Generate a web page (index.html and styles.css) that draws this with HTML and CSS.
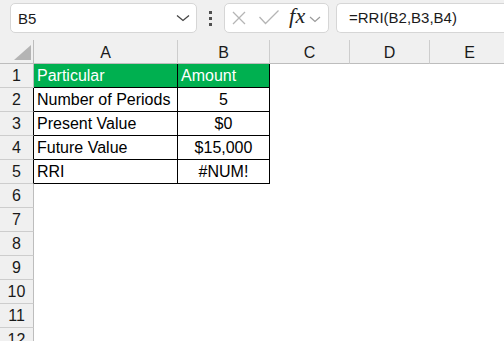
FILE: index.html
```html
<!DOCTYPE html>
<html>
<head>
<meta charset="utf-8">
<link rel="stylesheet" href="styles.css">
</head>
<body>
<div class="toolbar">
  <div class="namebox">
    <span class="nb-text">B5</span>
    <svg class="nb-chev" width="14" height="8" viewBox="0 0 14 8"><path d="M1 1.5 L7 6.5 L13 1.5" fill="none" stroke="#444" stroke-width="1.3"/></svg>
  </div>
  <div class="dots"><i></i><i></i><i></i></div>
  <div class="fbtns">
    <svg class="ic-x" width="16" height="16" viewBox="0 0 16 16"><path d="M2 2 L14 14 M14 2 L2 14" stroke="#b5b5b5" stroke-width="1.3" fill="none"/></svg>
    <svg class="ic-ok" width="22" height="16" viewBox="0 0 22 16"><path d="M1.5 8 L7.5 14.5 L20.5 1.5" stroke="#b5b5b5" stroke-width="1.3" fill="none"/></svg>
    <span class="fx">fx</span>
    <svg class="ic-chev" width="12" height="8" viewBox="0 0 12 8"><path d="M1 2 L6 6.5 L11 2" fill="none" stroke="#9a9a9a" stroke-width="1.2"/></svg>
  </div>
  <div class="finput">=RRI(B2,B3,B4)</div>
</div>
<div class="sheet">
  <div class="corner"><span class="tri"></span></div>
  <div class="ch">A</div><div class="ch">B</div><div class="ch">C</div><div class="ch">D</div><div class="ch">E</div>

  <div class="rh">1</div><div class="c hd">Particular</div><div class="c hd">Amount</div><div class="c"></div><div class="c"></div><div class="c"></div>
  <div class="rh tb">2</div><div class="c t">Number of Periods</div><div class="c t ctr">5</div><div class="c"></div><div class="c"></div><div class="c"></div>
  <div class="rh tb">3</div><div class="c t">Present Value</div><div class="c t ctr">$0</div><div class="c"></div><div class="c"></div><div class="c"></div>
  <div class="rh tb">4</div><div class="c t">Future Value</div><div class="c t ctr">$15,000</div><div class="c"></div><div class="c"></div><div class="c"></div>
  <div class="rh tb">5</div><div class="c t">RRI</div><div class="c t ctr">#NUM!</div><div class="c"></div><div class="c"></div><div class="c"></div>
  <div class="rh">6</div><div class="c"></div><div class="c"></div><div class="c"></div><div class="c"></div><div class="c"></div>
  <div class="rh">7</div><div class="c"></div><div class="c"></div><div class="c"></div><div class="c"></div><div class="c"></div>
  <div class="rh">8</div><div class="c"></div><div class="c"></div><div class="c"></div><div class="c"></div><div class="c"></div>
  <div class="rh">9</div><div class="c"></div><div class="c"></div><div class="c"></div><div class="c"></div><div class="c"></div>
  <div class="rh">10</div><div class="c"></div><div class="c"></div><div class="c"></div><div class="c"></div><div class="c"></div>
  <div class="rh">11</div><div class="c"></div><div class="c"></div><div class="c"></div><div class="c"></div><div class="c"></div>
  <div class="rh">12</div><div class="c"></div><div class="c"></div><div class="c"></div><div class="c"></div><div class="c"></div>
</div>
</body>
</html>
```
FILE: styles.css
```css
* { box-sizing: border-box; }
html, body { margin: 0; padding: 0; }
body {
  width: 504px;
  height: 341px;
  overflow: hidden;
  background: #ffffff;
  font-family: "Liberation Sans", Arial, sans-serif;
  color: #000;
}
.toolbar {
  height: 40px;
  background: #f0f0f0;
  display: flex;
  align-items: flex-start;
  padding-top: 3px;
  padding-left: 10px;
}
.namebox {
  width: 187px;
  height: 30px;
  background: #fff;
  border: 1px solid #d6d6d6;
  border-radius: 5px;
  display: flex;
  align-items: center;
  justify-content: space-between;
  padding-left: 7px;
  padding-right: 6px;
}
.nb-text { font-size: 15px; color: #1a1a1a; }
.dots {
  width: 27px;
  height: 30px;
  display: flex;
  flex-direction: column;
  align-items: center;
  justify-content: center;
  gap: 3px;
}
.dots i {
  display: block;
  width: 3px;
  height: 3px;
  background: #505050;
}
.fbtns {
  width: 105px;
  height: 30px;
  background: #fff;
  border: 1px solid #d6d6d6;
  border-radius: 5px;
  display: flex;
  align-items: center;
  padding-left: 6px;
}
.ic-x { margin-right: 11px; }
.ic-ok { margin-right: 9px; margin-top: -2px; }
.fx {
  font-family: "Liberation Serif", "Times New Roman", serif;
  font-style: italic;
  font-size: 22px;
  color: #222;
  margin-top: -4px;
  margin-right: 3px;
  letter-spacing: 0.5px;
}
.ic-chev { margin-top: 1px; }
.finput {
  flex: 1;
  height: 30px;
  margin-left: 7px;
  background: #fff;
  border: 1px solid #d6d6d6;
  border-right: none;
  border-radius: 5px 0 0 5px;
  font-size: 15px;
  line-height: 28px;
  padding-left: 12px;
  color: #1a1a1a;
}
.sheet {
  display: grid;
  grid-template-columns: 34px 144px 92px 80px 80px 80px;
  grid-auto-rows: 24px;
}
.corner {
  background: #f0f0f0;
  border-right: 1px solid #bdbdbd;
  border-bottom: 1px solid #bdbdbd;
  position: relative;
}
.tri {
  position: absolute;
  right: 2px;
  bottom: 3px;
  width: 0;
  height: 0;
  border-left: 17px solid transparent;
  border-bottom: 15px solid #b4b4b4;
}
.ch {
  background: #f0f0f0;
  border-right: 1px solid #cdcdcd;
  border-bottom: 1px solid #bdbdbd;
  font-size: 16px;
  line-height: 23px;
  padding-top: 1px;
  text-align: center;
  color: #1a1a1a;
}
.rh {
  background: #f0f0f0;
  border-right: 1px solid #bdbdbd;
  border-bottom: 1px solid #cdcdcd;
  font-size: 16px;
  line-height: 22px;
  padding-top: 1px;
  text-align: center;
  color: #1a1a1a;
}
.rh.tb { border-right-color: #000; }
.c {
  font-size: 16px;
  line-height: 22px;
  padding-top: 1px;
  padding-left: 3px;
  white-space: nowrap;
  overflow: hidden;
}
.c.hd {
  background: #00b050;
  color: #fff;
  border-right: 1px solid #000;
  border-bottom: 1px solid #000;
}
.c.t {
  border-right: 1px solid #000;
  border-bottom: 1px solid #000;
}
.c.ctr { text-align: center; padding-left: 0; }
```
